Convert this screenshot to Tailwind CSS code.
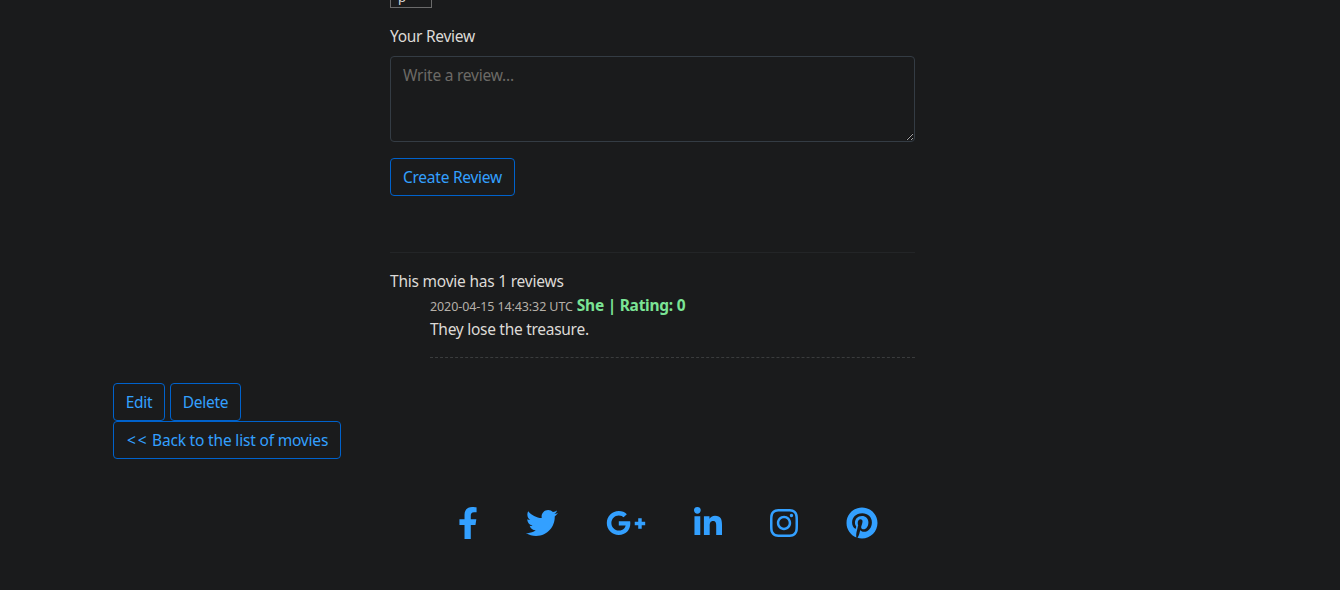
<!DOCTYPE html>
<html lang="en">
<head>
<meta charset="utf-8">
<title>Movie reviews</title>
<script src="https://cdn.jsdelivr.net/npm/@tailwindcss/browser@4"></script>
</head>
<body class="h-[590px] overflow-hidden bg-[#1a1b1c] font-['Noto_Sans','Open_Sans',sans-serif] text-[15.5px] leading-6 text-[#dddad6]">
<main class="ml-[113px] flex w-[1110px] flex-col">
  <form class="ml-[277px] flex w-[525px] flex-col items-start">
    <div class="flex h-2 w-[42px] items-end border border-t-0 border-[#6b6b6b] pl-[7px] text-[13px]"><span class="mb-[4px] leading-[12px]">p</span></div>
    <label for="review" class="mt-4 mb-2 tracking-[-0.28px]">Your Review</label>
    <textarea id="review" placeholder="Write a review..." class="block h-[86px] w-full resize rounded-[4px] border border-[#343c44] bg-[#1a1b1c] px-3 py-1.5 tracking-[-0.22px] placeholder:text-[#6c6a66]"></textarea>
    <button type="button" class="mt-4 h-[38px] w-[125px] rounded-[4px] border border-[#0062cc] tracking-[-0.25px] whitespace-nowrap text-[#33a0ff]">Create Review</button>
  </form>
  <section class="mt-14 ml-[277px] w-[525px] border-t border-[#232527] pt-4">
    <p class="tracking-[-0.22px]">This movie has 1 reviews</p>
    <div class="ml-10 border-b border-dashed border-[#3a3c3d] pb-4">
      <div class="flex h-6 items-baseline gap-1 whitespace-nowrap"><small class="text-[12.5px] tracking-[-0.1px] text-[#b5b0a8]">2020-04-15 14:43:32 UTC</small><strong class="font-bold tracking-[-0.26px] text-[#7be495]">She | Rating: 0</strong></div>
      <p class="tracking-[-0.28px]">They lose the treasure.</p>
    </div>
  </section>
  <nav class="mt-[25px] flex flex-col items-start whitespace-nowrap tracking-[-0.3px] text-[#33a0ff]">
    <div class="flex gap-[5px]">
      <a class="flex h-[38px] w-[52px] items-center justify-center rounded-[4px] border border-[#0062cc]">Edit</a>
      <a class="flex h-[38px] w-[71px] items-center justify-center rounded-[4px] border border-[#0062cc]">Delete</a>
    </div>
    <a class="flex h-[38px] w-[228px] items-center rounded-[4px] border border-[#0062cc] pl-3 tracking-[-0.18px]"><span class="w-[26px] pl-px tracking-[2px]">&lt;&lt; </span>Back to the list of movies</a>
  </nav>
</main>
<footer class="mt-12 ml-[458px] flex gap-12 text-[#33a0ff]">
  <svg class="h-8 w-5" viewBox="0 0 320 512" fill="currentColor"><path d="M279.14 288l14.22-92.66h-88.91v-60.13c0-25.35 12.42-50.06 52.24-50.06h40.42V6.26S260.43 0 225.36 0c-73.22 0-121.08 44.38-121.08 124.72v70.62H22.89V288h81.39v224h100.17V288z"/></svg>
  <svg class="h-8 w-8" viewBox="0 0 512 512" fill="currentColor"><path d="M459.37 151.716c.325 4.548.325 9.097.325 13.645 0 138.72-105.583 298.558-298.558 298.558-59.452 0-114.68-17.219-161.137-47.106 8.447.974 16.568 1.299 25.34 1.299 49.055 0 94.213-16.568 130.274-44.832-46.132-.975-84.792-31.188-98.112-72.772 6.498.974 12.995 1.624 19.818 1.624 9.421 0 18.843-1.3 27.614-3.573-48.081-9.747-84.143-51.98-84.143-102.985v-1.299c13.969 7.797 30.214 12.67 47.431 13.319-28.264-18.843-46.781-51.005-46.781-87.391 0-19.492 5.197-37.36 14.294-52.954 51.655 63.675 129.3 105.258 216.365 109.807-1.624-7.797-2.599-15.918-2.599-24.04 0-57.828 46.782-104.934 104.934-104.934 30.213 0 57.502 12.67 76.67 33.137 23.715-4.548 46.456-13.32 66.599-25.34-7.798 24.366-24.366 44.833-46.132 57.827 21.117-2.273 41.584-8.122 60.426-16.243-14.292 20.791-32.161 39.308-52.628 54.253z"/></svg>
  <svg class="h-8 w-10" viewBox="0 0 640 512" fill="currentColor"><path d="M386.061 228.496c1.834 9.692 3.143 19.384 3.143 31.956C389.204 370.205 315.599 448 204.8 448c-106.084 0-192-85.915-192-192s85.916-192 192-192c51.864 0 95.083 18.859 128.611 50.292l-52.126 50.03c-14.145-13.621-39.028-29.599-76.485-29.599-65.484 0-118.92 54.221-118.92 121.277 0 67.056 53.436 121.277 118.92 121.277 75.961 0 104.513-54.745 108.965-82.773H204.8v-66.009h181.261zm185.406 6.437V179.2h-56.001v55.733h-55.733v56.001h55.733v55.733h56.001v-55.733H627.2v-56.001h-55.733z"/></svg>
  <svg class="h-8 w-7" viewBox="0 0 448 512" fill="currentColor"><path d="M100.28 448H7.4V148.9h92.88zM53.79 108.1C24.09 108.1 0 83.5 0 53.8a53.79 53.79 0 0 1 107.58 0c0 29.7-24.1 54.3-53.79 54.3zM447.9 448h-92.68V302.4c0-34.7-.7-79.2-48.29-79.2-48.29 0-55.69 37.7-55.69 76.7V448h-92.78V148.9h89.08v40.8h1.3c12.4-23.5 42.69-48.3 87.88-48.3 94 0 111.28 61.9 111.28 142.3V448z"/></svg>
  <svg class="h-8 w-7" viewBox="0 0 448 512" fill="currentColor"><path d="M224.1 141c-63.6 0-114.9 51.3-114.9 114.9s51.3 114.9 114.9 114.9S339 319.5 339 255.9 287.7 141 224.1 141zm0 189.6c-41.1 0-74.7-33.5-74.7-74.7s33.5-74.7 74.7-74.7 74.7 33.5 74.7 74.7-33.6 74.7-74.7 74.7zm146.4-194.3c0 14.9-12 26.8-26.8 26.8-14.9 0-26.8-12-26.8-26.8s12-26.8 26.8-26.8 26.8 12 26.8 26.8zm76.1 27.2c-1.7-35.9-9.9-67.7-36.2-93.9-26.2-26.2-58-34.4-93.9-36.2-37-2.1-147.9-2.1-184.9 0-35.8 1.7-67.6 9.9-93.9 36.1s-34.4 58-36.2 93.9c-2.1 37-2.1 147.9 0 184.9 1.7 35.9 9.9 67.7 36.2 93.9s58 34.4 93.9 36.2c37 2.1 147.9 2.1 184.9 0 35.9-1.7 67.7-9.9 93.9-36.2 26.2-26.2 34.4-58 36.2-93.9 2.1-37 2.1-147.8 0-184.8zM398.8 388c-7.8 19.6-22.9 34.7-42.6 42.6-29.5 11.7-99.5 9-132.1 9s-102.7 2.6-132.1-9c-19.6-7.8-34.7-22.9-42.6-42.6-11.7-29.5-9-99.5-9-132.1s-2.6-102.7 9-132.1c7.8-19.6 22.9-34.7 42.6-42.6 29.5-11.7 99.5-9 132.1-9s102.7-2.6 132.1 9c19.6 7.8 34.7 22.9 42.6 42.6 11.7 29.5 9 99.5 9 132.1s2.7 102.7-9 132.1z"/></svg>
  <svg class="h-8 w-8" viewBox="0 0 496 512" fill="currentColor"><path d="M496 256c0 137-111 248-248 248-25.6 0-50.2-3.9-73.4-11.1 10.1-16.5 25.2-43.5 30.8-65 3-11.6 15.4-59 15.4-59 8.1 15.4 31.7 28.5 56.8 28.5 74.8 0 128.7-68.8 128.7-154.3 0-81.9-66.9-143.2-152.9-143.2-107 0-163.9 71.8-163.9 150.1 0 36.4 19.4 81.7 50.3 96.1 4.7 2.2 7.2 1.2 8.3-3.3.8-3.4 5-20.3 6.9-28.1.6-2.5.3-4.7-1.7-7.1-10.1-12.5-18.3-35.3-18.3-56.6 0-54.7 41.4-107.6 112-107.6 60.9 0 103.6 41.5 103.6 100.9 0 67.1-33.9 113.6-78 113.6-24.3 0-42.6-20.1-36.7-44.8 7-29.5 20.5-61.3 20.5-82.6 0-19-10.2-34.9-31.4-34.9-24.9 0-44.9 25.7-44.9 60.2 0 22 7.4 36.8 7.4 36.8s-24.5 103.8-29 123.2c-5 21.4-3 51.6-.9 71.2C65.4 450.9 0 361.1 0 256 0 119 111 8 248 8s248 111 248 248z"/></svg>
</footer>
</body>
</html>
